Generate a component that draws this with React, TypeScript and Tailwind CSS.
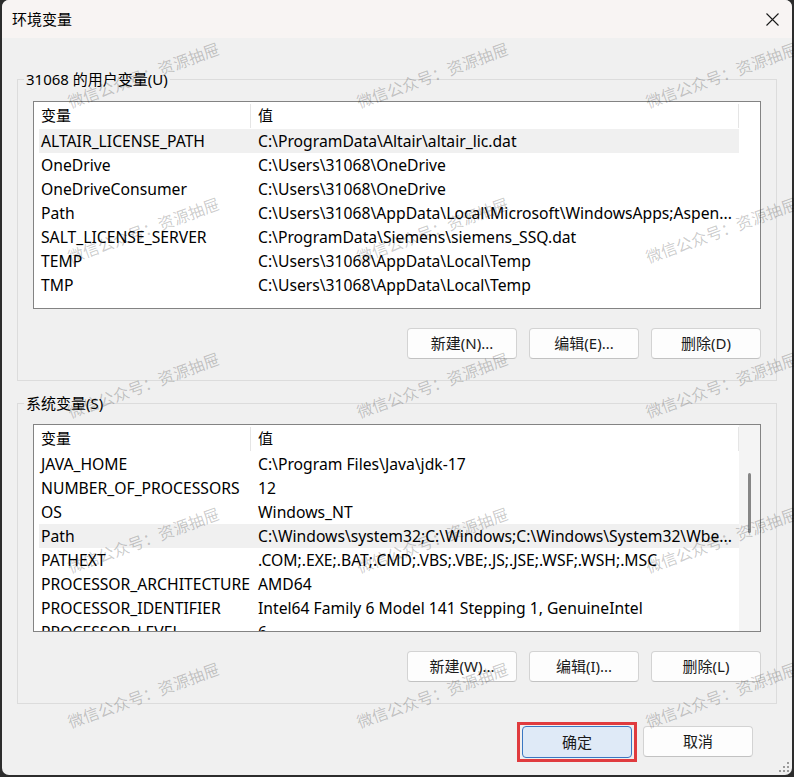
import React from 'react'

type EnvVar = [name: string, value: string]

const USER_VARS: EnvVar[] = [
  ['ALTAIR_LICENSE_PATH', 'C:\\ProgramData\\Altair\\altair_lic.dat'],
  ['OneDrive', 'C:\\Users\\31068\\OneDrive'],
  ['OneDriveConsumer', 'C:\\Users\\31068\\OneDrive'],
  ['Path', 'C:\\Users\\31068\\AppData\\Local\\Microsoft\\WindowsApps;Aspen...'],
  ['SALT_LICENSE_SERVER', 'C:\\ProgramData\\Siemens\\siemens_SSQ.dat'],
  ['TEMP', 'C:\\Users\\31068\\AppData\\Local\\Temp'],
  ['TMP', 'C:\\Users\\31068\\AppData\\Local\\Temp'],
]

const SYSTEM_VARS: EnvVar[] = [
  ['JAVA_HOME', 'C:\\Program Files\\Java\\jdk-17'],
  ['NUMBER_OF_PROCESSORS', '12'],
  ['OS', 'Windows_NT'],
  ['Path', 'C:\\Windows\\system32;C:\\Windows;C:\\Windows\\System32\\Wbe...'],
  ['PATHEXT', '.COM;.EXE;.BAT;.CMD;.VBS;.VBE;.JS;.JSE;.WSF;.WSH;.MSC'],
  ['PROCESSOR_ARCHITECTURE', 'AMD64'],
  ['PROCESSOR_IDENTIFIER', 'Intel64 Family 6 Model 141 Stepping 1, GenuineIntel'],
  ['PROCESSOR_LEVEL', '6'],
]

// tiled watermark: three columns, five rows
const MARK_X = [68, 357, 646]
const MARK_Y = [94, 249, 404, 559, 714]

function VarList({ rows, selected, scroll }: { rows: EnvVar[]; selected: number; scroll?: boolean }) {
  return (
    <div className="flex h-[208px] border border-[#838383] bg-white text-[15.7px]">
      <div className="flex w-[705px] flex-col overflow-hidden pl-[5px]">
        <div className="flex h-[27px] shrink-0 items-center text-[15px]">
          <div className="flex h-[24px] w-[212px] items-center border-r border-[#e5e5e5] pl-[2px]">变量</div>
          <div className="flex h-[24px] flex-1 items-center border-r border-[#e5e5e5] pl-[7px]">值</div>
        </div>
        {rows.map(([name, value], i) => (
          <div
            key={name}
            className={`flex h-[24px] shrink-0 items-center whitespace-nowrap pt-[2px] ${i === selected ? 'bg-[#f0f0f0]' : ''}`}
          >
            <div className="w-[212px] shrink-0 overflow-hidden pl-[2px]">{name}</div>
            <div className="flex-1 overflow-hidden pl-[7px]">{value}</div>
          </div>
        ))}
      </div>
      <div className={`flex-1 pl-[9px] pt-[48px] ${scroll ? 'bg-[#f4f4f4]' : ''}`}>
        {scroll && <div className="h-[60px] w-[3px] rounded-full bg-[#868686]" />}
      </div>
    </div>
  )
}

function Btn({ children, primary }: { children: React.ReactNode; primary?: boolean }) {
  return (
    <button
      className={
        primary
          ? 'h-[32px] w-[110px] rounded-[4px] border border-[#3a77c2] bg-[#dfeaf7] text-[15px] text-[#1a1a1a]'
          : 'h-[31px] w-[110px] rounded-[4px] border border-[#d3d3d3] border-b-[#c2c2c2] bg-[#fdfdfd] text-[15px] text-[#1a1a1a]'
      }
    >
      {children}
    </button>
  )
}

function VarGroup({
  title,
  rows,
  selected,
  scroll,
  keys,
  className,
}: {
  title: string
  rows: EnvVar[]
  selected: number
  scroll?: boolean
  keys: [string, string, string]
  className: string
}) {
  return (
    <fieldset className={`border border-[#dcdcdc] px-[15px] pb-[21px] ${className}`}>
      <legend className="-ml-[9px] px-[2px] text-[15px] leading-[20px]">{title}</legend>
      <VarList rows={rows} selected={selected} scroll={scroll} />
      <div className="mt-[19px] flex justify-end gap-[12px]">
        <Btn>新建({keys[0]})...</Btn>
        <Btn>编辑({keys[1]})...</Btn>
        <Btn>删除({keys[2]})</Btn>
      </div>
    </fieldset>
  )
}

export default function App() {
  return (
    <div className="relative h-[777px] w-[794px] overflow-hidden bg-[#2c2c2c] px-[2px] pb-[2px] font-['Segoe_UI','Noto_Sans','Noto_Sans_CJK_SC',sans-serif] text-[15px] text-black">
      <div className="relative flex h-full flex-col overflow-hidden rounded-[7px] bg-[#f0f0f0]">
        <div className="flex h-[38px] shrink-0 items-center justify-between bg-[#f8f4f3] pl-[10px]">
          <span className="text-[15px]">环境变量</span>
          <div className="flex h-full w-[40px] items-center justify-center">
            <svg width="13" height="13" viewBox="0 0 13 13" fill="none" stroke="#1a1a1a" strokeWidth="1.1">
              <path d="M0.5 0.5l12 12M12.5 0.5l-12 12" />
            </svg>
          </div>
        </div>

        <div className="flex flex-col px-[15px]">
          <VarGroup
            className="mt-[31px] pt-[12px]"
            title="31068 的用户变量(U)"
            rows={USER_VARS}
            selected={0}
            keys={['N', 'E', 'D']}
          />
          <VarGroup
            className="mt-[12px] pt-[11px]"
            title="系统变量(S)"
            rows={SYSTEM_VARS}
            selected={3}
            scroll
            keys={['W', 'I', 'L']}
          />
          <div className="mt-[22px] flex justify-end gap-[11px] pr-[24px]">
            <div className="relative">
              <Btn primary>确定</Btn>
              <span className="pointer-events-none absolute -bottom-[4px] -left-[5px] -right-[5px] -top-[4px] border-[3px] border-[#e03b3e]" />
            </div>
            <Btn>取消</Btn>
          </div>
        </div>

        {/* size grip */}
        <svg className="absolute bottom-[3px] right-[3px]" width="10" height="10" viewBox="0 0 10 10" fill="#9a9a9a">
          <rect x="8" y="0" width="2" height="2" />
          <rect x="4" y="4" width="2" height="2" />
          <rect x="8" y="4" width="2" height="2" />
          <rect x="0" y="8" width="2" height="2" />
          <rect x="4" y="8" width="2" height="2" />
          <rect x="8" y="8" width="2" height="2" />
        </svg>
      </div>

      <div className="pointer-events-none absolute inset-0 font-['Noto_Sans_CJK_SC',sans-serif]">
        {MARK_Y.map((y) =>
          MARK_X.map((x) => (
            <span
              key={`${x}-${y}`}
              className="absolute origin-left -rotate-20 whitespace-nowrap text-[16px] leading-[16px] text-[rgba(0,0,0,0.21)]"
              style={{ left: x, top: y }}
            >
              微信公众号：资源抽屉
            </span>
          )),
        )}
      </div>
    </div>
  )
}
